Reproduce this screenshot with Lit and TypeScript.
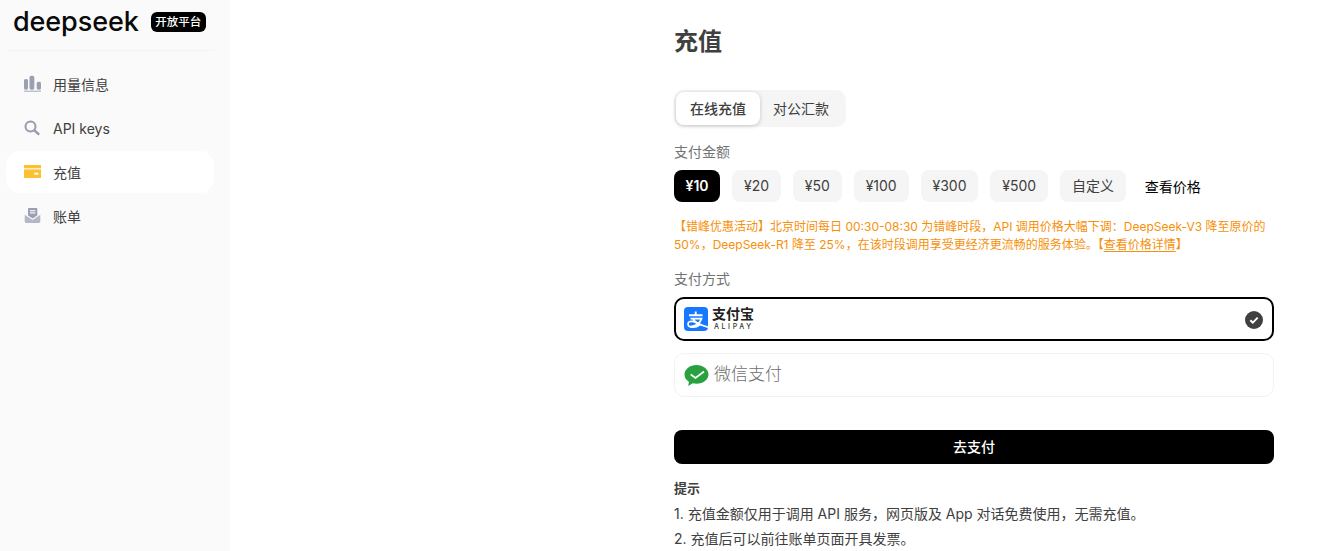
import { LitElement, html, css, svg } from "lit";
import { customElement } from "lit/decorators.js";

const amounts = ["¥10", "¥20", "¥50", "¥100", "¥300", "¥500", "自定义"];

const icons = {
  usage: svg`<svg width="18" height="18" viewBox="0 0 18 18"><rect x="1" y="4" width="4" height="10.700" rx="1.600" fill="#9a9fb2"/><rect x="6.500" y="0.700" width="4.800" height="14" rx="1.800" fill="#9a9fb2"/><rect x="13.700" y="6.700" width="4.300" height="8" rx="1.600" fill="#9a9fb2"/><rect x="1" y="15.700" width="17" height="0.900" fill="#9a9fb2"/></svg>`,
  key: svg`<svg width="18" height="18" viewBox="0 0 18 18" fill="none"><circle cx="7.500" cy="7.500" r="5" stroke="#9a9aac" stroke-width="2"/><path d="M11.400 11.400 15.500 15" stroke="#9a9aac" stroke-width="2.400" stroke-linecap="round"/></svg>`,
  card: svg`<svg width="18" height="18" viewBox="0 0 18 18"><path d="M1 2h17v3.300H1z" fill="#fdc033"/><path d="M1 6.400h17V15H1z" fill="#fdc033"/><rect x="11.300" y="9.700" width="4" height="2" fill="#fff"/></svg>`,
  bill: svg`<svg width="18" height="18" viewBox="0 0 18 18"><path d="M5 2c0-.6.400-1 1-1h7.300c.6 0 1 .4 1 1v6.500L9.600 11.500 5 8.500z" fill="#9a9fb2"/><rect x="7" y="3.200" width="5.400" height="1.100" fill="#fff"/><rect x="7" y="5.400" width="5.400" height="1.100" fill="#fff"/><path d="M1.700 7.800l8 5.300 7.600-5.300v6.800c0 .9-.6 1.400-1.400 1.400H3.100c-.8 0-1.400-.5-1.400-1.400z" fill="#b4b8c6"/></svg>`,
};

@customElement("app-root")
export class AppRoot extends LitElement {
  static styles = css`
    :host {
      display: flex;
      width: 1317px;
      height: 551px;
      overflow: hidden;
      background: #fff;
      font-family: Inter, "Noto Sans CJK SC", sans-serif;
      color: #404040;
    }
    .side {
      width: 230px;
      flex: none;
      background: #fafafa;
      padding: 0 16px 0 6px;
      box-sizing: border-box;
    }
    .brand {
      height: 51px;
      box-sizing: border-box;
      border-bottom: 1px solid #f3f3f3;
      display: flex;
      align-items: center;
      gap: 12px;
      padding: 0 0 7px 7px;
      margin-bottom: 12px;
    }
    .logo {
      font-family: Inter, sans-serif;
      font-size: 27px;
      font-weight: 500;
      letter-spacing: -0.100px;
      color: #0a0a0a;
      line-height: 30px;
    }
    .tag {
      background: #000;
      color: #fff;
      font-size: 11.500px;
      font-weight: 500;
      line-height: 20px;
      height: 20px;
      border-radius: 6px;
      padding: 0 4.500px;
    }
    .nav {
      display: flex;
      align-items: center;
      gap: 12px;
      height: 42px;
      margin-bottom: 2px;
      padding-left: 17px;
      border-radius: 14px;
      font-size: 14px;
      font-weight: 400;
      color: #404040;
    }
    .nav.on { background: #fff; }
    .main {
      flex: 1;
      padding: 25px 0 0 444px;
      box-sizing: border-box;
    }
    .col { width: 600px; }
    h1 {
      margin: 0 0 31px;
      font-size: 24px;
      line-height: 34px;
      font-weight: 600;
      color: #404040;
    }
    .tabs {
      display: inline-flex;
      background: #f5f5f5;
      border-radius: 10px;
      padding: 2px;
      font-size: 14px;
      vertical-align: top;
    }
    .tab {
      height: 33px;
      line-height: 33px;
      padding: 0 15px 0 13px;
      border-radius: 8px;
    }
    .tab.on {
      padding: 0 14px;
      background: #fff;
      font-weight: 500;
      box-shadow: 0 1px 4px rgba(0, 0, 0, 0.2);
    }
    .label {
      font-size: 14px;
      line-height: 20px;
      color: #737373;
    }
    .tabs-row { height: 37px; margin-bottom: 15px; }
    .amounts {
      display: flex;
      align-items: center;
      gap: 12px;
      margin-top: 8px;
      font-size: 14px;
    }
    .amt {
      height: 32px;
      line-height: 32px;
      padding: 0 11.900px;
      border-radius: 8px;
      background: #f5f5f5;
    }
    .amt.on { background: #000; color: #fff; font-weight: 600; padding: 0 11.500px; }
    .price { color: #000; font-weight: 400; padding-left: 7px; }
    .notice {
      margin-top: 16px;
      font-size: 12px;
      line-height: 18px;
      color: #f79009;
    }
    .notice div { white-space: nowrap; }
    .notice u { text-underline-offset: 2px; }
    .pay-label { margin-top: 15px; margin-bottom: 8px; }
    .pay {
      height: 44px;
      box-sizing: border-box;
      border: 1px solid #f3f3f3;
      border-radius: 10px;
      display: flex;
      align-items: center;
      padding-left: 9px;
      margin-bottom: 12px;
    }
    .pay.on {
      border: 2px solid #000;
      padding-left: 8px;
      justify-content: space-between;
      padding-right: 9px;
    }
    .ali { display: flex; align-items: center; gap: 4px; }
    .ali-text { display: flex; flex-direction: column; align-items: flex-start; }
    .ali-cn { font-size: 14px; line-height: 15px; font-weight: 700; color: #222; margin-top: -2px; }
    .ali-en { font-size: 7px; line-height: 9px; letter-spacing: 2.600px; color: #333; font-family: Inter, sans-serif; font-weight: 500; padding-left: 2px; margin-top: 1px; }
    .check { margin-top: 2px; }
    .wx { display: flex; align-items: center; gap: 5px; font-size: 17px; color: #6e6e6e; font-weight: 300; }
    .wx span { margin-bottom: 6px; }
    svg { display: block; flex: none; }
    .go {
      margin-top: 33px;
      height: 34px;
      line-height: 34px;
      background: #000;
      color: #fff;
      text-align: center;
      border-radius: 8px;
      font-size: 14px;
      font-weight: 500;
    }
    .tip-h { margin-top: 14px; font-size: 13px; line-height: 20px; font-weight: 600; }
    .tip { font-size: 14px; line-height: 20px; margin-top: 5px; color: #404040; }
    .tip-h + .tip { margin-top: 6px; }
  `;

  render() {
    return html`
      <aside class="side">
        <div class="brand">
          <span class="logo">deepseek</span><span class="tag">开放平台</span>
        </div>
        <div class="nav">${icons.usage}<span>用量信息</span></div>
        <div class="nav">${icons.key}<span>API keys</span></div>
        <div class="nav on">${icons.card}<span>充值</span></div>
        <div class="nav">${icons.bill}<span>账单</span></div>
      </aside>
      <main class="main">
        <div class="col">
          <h1>充值</h1>
          <div class="tabs-row">
            <div class="tabs">
              <div class="tab on">在线充值</div>
              <div class="tab">对公汇款</div>
            </div>
          </div>
          <div class="label">支付金额</div>
          <div class="amounts">
            ${amounts.map((a, i) => html`<div class="amt ${i === 0 ? "on" : ""}">${a}</div>`)}
            <div class="price">查看价格</div>
          </div>
          <div class="notice">
            <div>【错峰优惠活动】北京时间每日 00:30-08:30 为错峰时段，API 调用价格大幅下调：DeepSeek-V3 降至原价的</div>
            <div>50%，DeepSeek-R1 降至 25%，在该时段调用享受更经济更流畅的服务体验。【<u>查看价格详情</u>】</div>
          </div>
          <div class="label pay-label">支付方式</div>
          <div class="pay on">
            <div class="ali">
              <svg width="24" height="24" viewBox="0 0 24 24">
                <rect width="24" height="24" rx="4" fill="#1677ff"/>
                <path d="M5 8.200h13.500M11.700 4.400v3.800M6.500 11.600h11c-1.300 4.600-5.300 7.600-11.300 8.200M9 11.800c1.600 3.400 5.800 5.600 15 8.400" stroke="#fff" stroke-width="1.900" fill="none"/>
                <path d="M4 17c0-2 2.200-3 4.500-2.600 3 .5 5 2 7 3.600-2 1.600-4.500 2.300-6.800 2.200C6 20.100 4 19 4 17z" fill="none" stroke="#fff" stroke-width="1.700"/>
              </svg>
              <div class="ali-text">
                <span class="ali-cn">支付宝</span>
                <span class="ali-en">ALIPAY</span>
              </div>
            </div>
            <svg class="check" width="18" height="18" viewBox="0 0 18 18">
              <circle cx="9" cy="9" r="9" fill="#404040"/>
              <path d="M5.300 9.300 7.800 11.700 12.700 6.700" fill="none" stroke="#fff" stroke-width="1.900"/>
            </svg>
          </div>
          <div class="pay">
            <div class="wx">
              <svg width="25" height="23" viewBox="0 0 25 23">
                <path d="M12.500 1C5.900 1 .5 5.200.5 10.500c0 3 1.700 5.600 4.400 7.300L4.300 22l4.400-2.700c1.200.3 2.500.4 3.800.4 6.600 0 12-4.200 12-9.300S19.100 1 12.500 1z" fill="#2aa13f"/>
                <path d="M6.700 10.500 11.500 14 20 7.500" fill="none" stroke="#fff" stroke-width="1.800"/>
              </svg>
              <span>微信支付</span>
            </div>
          </div>
          <div class="go">去支付</div>
          <div class="tip-h">提示</div>
          <div class="tip">1. 充值金额仅用于调用 API 服务，网页版及 App 对话免费使用，无需充值。</div>
          <div class="tip">2. 充值后可以前往账单页面开具发票。</div>
        </div>
      </main>
    `;
  }
}
